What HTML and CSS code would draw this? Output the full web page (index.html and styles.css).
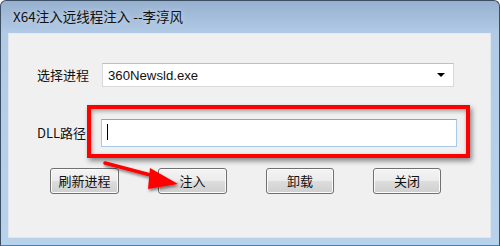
FILE: index.html
```html
<!DOCTYPE html>
<html>
<head>
<meta charset="utf-8">
<link rel="stylesheet" href="styles.css">
</head>
<body>
<div class="window">
  <div class="titlebar"><span class="title">X64注入远线程注入 --李淳风</span></div>
  <div class="client">
    <div class="row row-proc">
      <span class="label">选择进程</span>
      <div class="combo"><span class="combo-text">360Newsld.exe</span><span class="caret"></span></div>
    </div>
    <div class="row row-dll">
      <span class="label">DLL路径</span>
      <div class="input"><span class="cursor"></span></div>
    </div>
    <div class="buttons">
      <button class="btn">刷新进程</button>
      <button class="btn">注入</button>
      <button class="btn">卸载</button>
      <button class="btn">关闭</button>
    </div>
  </div>
  <div class="highlight"></div>
  <svg class="arrow" width="500" height="246" viewBox="0 0 500 246">
    <defs>
      <filter id="sh" x="-20%" y="-20%" width="140%" height="140%">
        <feGaussianBlur in="SourceAlpha" stdDeviation="1.6"/>
        <feOffset dx="1" dy="2"/>
        <feComponentTransfer><feFuncA type="linear" slope="0.5"/></feComponentTransfer>
        <feMerge><feMergeNode/><feMergeNode in="SourceGraphic"/></feMerge>
      </filter>
    </defs>
    <g filter="url(#sh)">
      <line x1="105" y1="163" x2="158" y2="177" stroke="#f00" stroke-width="3.5" stroke-linecap="round"/>
      <polygon points="178,184 150,168 148,189" fill="#f00"/>
    </g>
  </svg>
</div>
</body>
</html>
```
FILE: styles.css
```css
html, body {
  margin: 0;
  padding: 0;
  background: #ffffff;
}
.window {
  position: relative;
  width: 500px;
  height: 246px;
  box-sizing: border-box;
  border: 1px solid #3b4e62;
  border-bottom-color: #2a8fa8;
  border-radius: 6px 6px 0 0;
  background: linear-gradient(to bottom, #96b0cf 0px, #b1cae6 32px, #b9d2ec 100%);
  display: flex;
  flex-direction: column;
  overflow: hidden;
  font-family: "Noto Sans CJK SC", "Liberation Sans", sans-serif;
}
.titlebar {
  height: 32px;
  display: flex;
  align-items: center;
  padding-left: 12px;
  box-sizing: border-box;
}
.title {
  font-size: 13.5px;
  color: #111;
  padding-bottom: 3px;
  text-shadow: 0 0 6px rgba(255,255,255,0.6);
}
.client {
  margin: 0 8px 7px 7px;
  flex: 1;
  background: #f0f0f0;
  border: 1px solid #dfe6ee;
  border-top-color: #e8ecf0;
  box-sizing: border-box;
  display: flex;
  flex-direction: column;
}
.row {
  display: flex;
  align-items: center;
}
.label {
  width: 65px;
  padding-left: 28px;
  font-size: 13px;
  color: #111;
  line-height: 16px;
}
.row-proc {
  margin-top: 29px;
}
.combo {
  width: 352px;
  height: 24px;
  box-sizing: border-box;
  background: #fff;
  border: 1px solid #d9d9d9;
  border-top-color: #bfbfbf;
  display: flex;
  align-items: center;
  justify-content: space-between;
  padding: 0 8px 0 5px;
}
.combo-text {
  font-family: "Liberation Sans", Arial, sans-serif;
  font-size: 13.2px;
  color: #111;
}
.caret {
  width: 0;
  height: 0;
  border-left: 4px solid transparent;
  border-right: 4px solid transparent;
  border-top: 4px solid #000;
}
.row-dll {
  margin-top: 32px;
}
.row-dll .label {
  width: 64px;
}
.input {
  width: 356px;
  height: 28px;
  box-sizing: border-box;
  background: #fff;
  border: 1px solid #a8c8e6;
  border-top-color: #7fa9d2;
  display: flex;
  align-items: center;
  padding-left: 5px;
}
.cursor {
  width: 1px;
  height: 16px;
  background: #000;
  margin-bottom: 3px;
}
.buttons {
  display: flex;
  gap: 39px;
  margin-top: 21px;
  padding-left: 41px;
}
.btn {
  width: 69px;
  height: 26px;
  box-sizing: border-box;
  border: 1px solid #707070;
  border-radius: 3px;
  background: linear-gradient(to bottom, #f4f4f4 0%, #ebebeb 50%, #dddddd 51%, #cfcfcf 100%);
  box-shadow: inset 0 0 0 1px #fbfbfb;
  font-family: "Noto Sans CJK SC", sans-serif;
  font-size: 13px;
  color: #111;
  padding: 0 0 2px 0;
  margin: 0;
}
.btn:nth-child(n+3) {
  width: 68px;
}
.highlight {
  position: absolute;
  left: 86px;
  top: 104px;
  width: 383px;
  height: 53px;
  box-sizing: border-box;
  border: 4px solid #ff0000;
  box-shadow: 2px 3px 5px rgba(0,0,0,0.45), inset 1px 2px 4px rgba(0,0,0,0.35);
}
.arrow {
  position: absolute;
  left: -1px;
  top: -1px;
  pointer-events: none;
}
```
